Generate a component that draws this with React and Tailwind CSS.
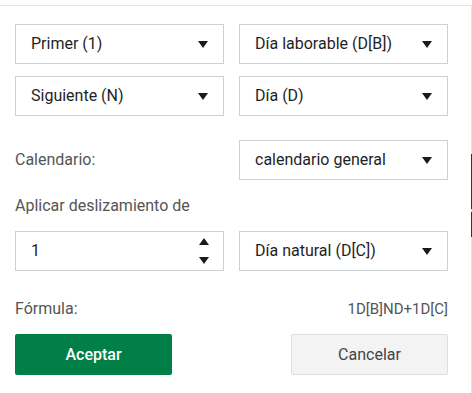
import { useState } from 'react';

function Arrow() {
    return (
        <svg width="10" height="7" viewBox="0 0 10 7" className="shrink-0">
            <path d="M0 0 L10 0 L5 7 Z" fill="#1a1a1a" />
        </svg>
    );
}

function Select({ value }) {
    return (
        <div className="flex h-[40px] items-center justify-between border border-[#c9d3d6] bg-white pl-[15px] pr-[15px] text-[16px] text-[#1f1f1f]">
            <span>{value}</span>
            <Arrow />
        </div>
    );
}

function NumberInput({ value }) {
    return (
        <div className="flex h-[40px] items-center justify-between border border-[#c9d3d6] bg-white pl-[15px] pr-[14px] text-[16px] text-[#1f1f1f]">
            <span>{value}</span>
            <div className="flex flex-col items-center gap-[12px]">
                <svg width="10" height="7" viewBox="0 0 10 7">
                    <path d="M0 7 L10 7 L5 0 Z" fill="#1a1a1a" />
                </svg>
                <svg width="10" height="7" viewBox="0 0 10 7">
                    <path d="M0 0 L10 0 L5 7 Z" fill="#1a1a1a" />
                </svg>
            </div>
        </div>
    );
}

export default function App() {
    const [slide] = useState('1');

    return (
        <div
            className="flex h-[393px] w-[472px] bg-white"
            style={{ fontFamily: 'Roboto, "Noto Sans", sans-serif' }}
        >
            <div className="mt-[5px] w-[471px] border-t border-[#e4e4e4] px-[15px] pt-[18px]">
                <div className="grid grid-cols-[209px_209px] gap-x-[15px] gap-y-[12px]">
                    <Select value="Primer (1)" />
                    <Select value="Día laborable (D[B])" />
                    <Select value="Siguiente (N)" />
                    <Select value="Día (D)" />
                </div>

                <div className="mt-[24px] grid grid-cols-[209px_209px] items-center gap-x-[15px]">
                    <span className="text-[16px] text-[#555555]">Calendario:</span>
                    <Select value="calendario general" />
                </div>

                <div className="mt-[16px] text-[16px] leading-[20px] text-[#555555]">
                    Aplicar deslizamiento de
                </div>

                <div className="mt-[15px] grid grid-cols-[209px_209px] gap-x-[15px]">
                    <NumberInput value={slide} />
                    <Select value="Día natural (D[C])" />
                </div>

                <div className="mt-[28px] flex w-[433px] items-center justify-between text-[15px] leading-[20px] text-[#555555]">
                    <span className="text-[16px]">Fórmula:</span>
                    <span>1D[B]ND+1D[C]</span>
                </div>

                <div className="mt-[15px] flex w-[433px] justify-between">
                    <button
                        type="button"
                        className="h-[41px] w-[157px] rounded-[2px] bg-[#008046] text-[16px] font-medium text-white"
                    >
                        Aceptar
                    </button>
                    <button
                        type="button"
                        className="h-[41px] w-[157px] rounded-[2px] border border-[#dedede] bg-[#f3f3f3] text-[16px] text-[#444444]"
                    >
                        Cancelar
                    </button>
                </div>
            </div>

            <div className="mt-[5px] flex w-[1px] flex-col bg-[#e4e4e4]">
                <div className="h-[149px]" />
                <div className="h-[55px] bg-[#333333]" />
                <div className="h-[3px]" />
                <div className="h-[25px] bg-[#333333]" />
            </div>
        </div>
    );
}
